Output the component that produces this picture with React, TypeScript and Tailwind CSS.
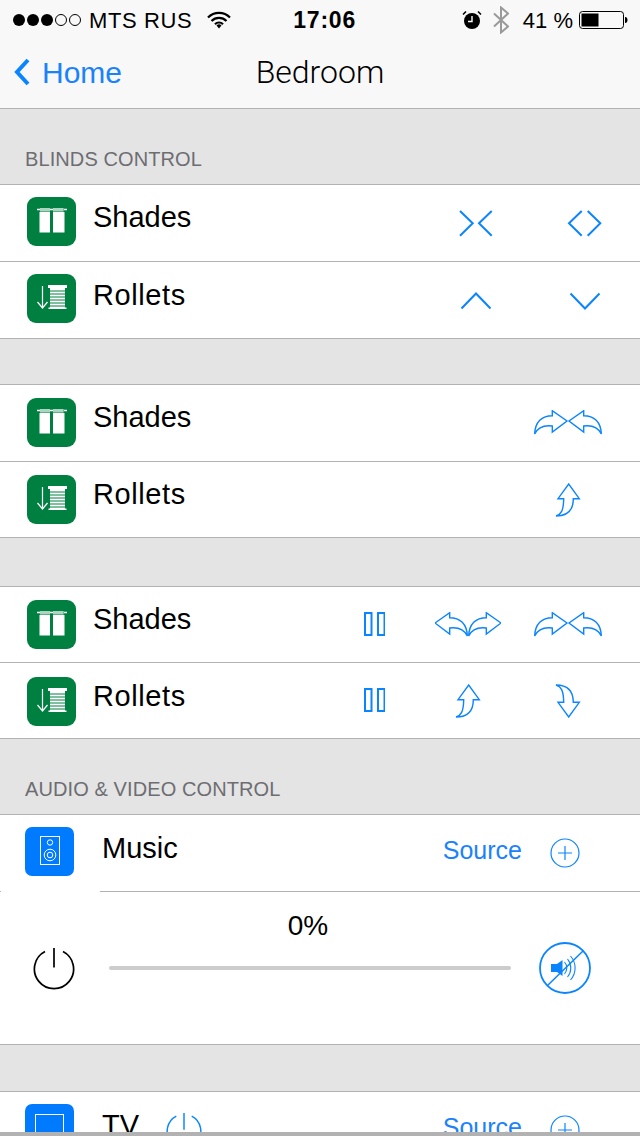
import type { ReactNode } from 'react'

const blue = '#0a84ff'

function ShadesTile() {
  return (
    <div className="h-[49px] w-[49px] shrink-0 rounded-[9px] bg-[#008040]">
      <svg width="49" height="49" viewBox="0 0 49 49" fill="none">
        <rect x="13" y="11" width="10" height="3.500" fill="#fff" opacity="0.45" />
        <rect x="26" y="11" width="11" height="3.500" fill="#fff" opacity="0.45" />
        <path d="M14 11v3.500M16 11v3.500M18 11v3.500M20 11v3.500M22 11v3.500M27 11v3.500M29 11v3.500M31 11v3.500M33 11v3.500M35 11v3.500" stroke="#fff" strokeWidth="0.8" />
        <path d="M10 12.500h3M23 12.500h3M37 12.500h3" stroke="#fff" strokeWidth="1.400" />
        <rect x="12.500" y="15" width="10.500" height="20.500" fill="#fff" />
        <rect x="26" y="15" width="11.500" height="20.500" fill="#fff" />
      </svg>
    </div>
  )
}

function RolletsTile() {
  return (
    <div className="h-[49px] w-[49px] shrink-0 rounded-[9px] bg-[#008040]">
      <svg width="49" height="49" viewBox="0 0 49 49" fill="none">
        <path d="M15.500 12v22M10.500 28l5 6 5-6" stroke="#fff" strokeWidth="1.200" />
        <rect x="21" y="11" width="19" height="3" fill="#fff" />
        <rect x="23" y="14" width="15" height="20" fill="#fff" />
        <path d="M23 17h15M23 20h15M23 23h15M23 26h15M23 29h15M23 32h15" stroke="#008040" strokeWidth="1" />
        <rect x="21.500" y="33.500" width="18" height="1.500" fill="#fff" />
      </svg>
    </div>
  )
}

function SpeakerTile() {
  return (
    <div className="h-[49px] w-[49px] shrink-0 rounded-[7px] bg-[#007aff]">
      <svg width="49" height="49" viewBox="0 0 49 49" fill="none" stroke="#fff">
        <rect x="15.500" y="9.500" width="19" height="28" />
        <circle cx="25" cy="15.500" r="2.700" />
        <circle cx="25" cy="28" r="5.800" />
        <circle cx="25" cy="28" r="2.800" />
      </svg>
    </div>
  )
}

function TvTile() {
  return (
    <div className="h-[49px] w-[49px] shrink-0 rounded-[7px] bg-[#007aff]">
      <svg width="49" height="49" viewBox="0 0 49 49" fill="none" stroke="#fff">
        <rect x="10.500" y="10.500" width="28" height="24" />
      </svg>
    </div>
  )
}

function Chevrons({ d }: { d: string }) {
  return (
    <svg width="36" height="28" viewBox="0 0 36 28" fill="none" stroke={blue} strokeWidth="2">
      <path d={d} />
    </svg>
  )
}

const closeH = 'M2 2l12.700 12.300L2 26.700M33.700 2L21 14.300l12.700 12.400'
const openH = 'M14.700 2L2 14.300l12.700 12.400M20.700 2l12.600 12.300-12.600 12.400'
const up = 'M3.500 22.500L18 7.500 32.500 22.500'
const down = 'M3.500 7.500L18 22.500 32.500 7.500'

const arrowD = 'M0.700 24C1 12 8 5.700 18.300 5.700V0.700L33 11 18.300 22V16C10 15 4 17 0.700 24Z'

function ArrowsIn() {
  return (
    <svg width="68" height="26" viewBox="0 0 68 26" fill="none" stroke={blue} strokeWidth="1.400">
      <path d={arrowD} />
      <path d={arrowD} transform="translate(68 0) scale(-1 1)" />
    </svg>
  )
}

function ArrowsOut() {
  return (
    <svg width="66" height="26" viewBox="0 0 66 26" fill="none" stroke={blue} strokeWidth="1.400">
      <path d={arrowD} transform="translate(33 0)" />
      <path d={arrowD} transform="translate(33 0) scale(-1 1)" />
    </svg>
  )
}

const arrowUpD = 'M1 33C6 31.500 8.500 28 8.700 15.700H3L13.700 1 24.300 15.700H18.300C18.300 27 12 33 1 33Z'

function ArrowUp() {
  return (
    <svg width="26" height="34" viewBox="0 0 26 34" fill="none" stroke={blue} strokeWidth="1.400">
      <path d={arrowUpD} />
    </svg>
  )
}

function ArrowDown() {
  return (
    <svg width="26" height="34" viewBox="0 0 26 34" fill="none" stroke={blue} strokeWidth="1.400">
      <path d={arrowUpD} transform="translate(0 34) scale(1 -1)" />
    </svg>
  )
}

function Pause() {
  return (
    <svg className="mb-[2px]" width="22" height="24" viewBox="0 0 22 24" fill="none" stroke={blue} strokeWidth="2">
      <rect x="2" y="1" width="6.500" height="22" />
      <rect x="15" y="1" width="6.500" height="22" />
    </svg>
  )
}

function Power({ color, size }: { color: string; size: number }) {
  return (
    <svg width={size} height={size} viewBox="0 0 42 42" fill="none" stroke={color} strokeWidth="1.700">
      <path d="M12 3.600A19.600 19.600 0 1 0 30 3.600M21 0V19.500" />
    </svg>
  )
}

function Plus() {
  return (
    <svg width="30" height="30" viewBox="0 0 30 30" fill="none" stroke={blue} strokeWidth="1.200">
      <circle cx="15" cy="15" r="14" />
      <path d="M8 15h14M15 8v14" />
    </svg>
  )
}

function Mute() {
  return (
    <svg width="52" height="52" viewBox="0 0 52 52" fill="none" stroke={blue}>
      <circle cx="26" cy="26" r="25" strokeWidth="1.800" />
      <path d="M12 22h6l5.500-4v16l-5.500-4h-6Z" fill={blue} stroke="none" />
      <path d="M44.500 8.500L8.500 43.500" strokeWidth="1.500" />
      <path d="M25.500 20a9 9 0 0 1 0 12M28.500 17a14 14 0 0 1 0 18M31.500 14a18 18 0 0 1 0 24" strokeWidth="1.100" />
    </svg>
  )
}

function Wifi() {
  return (
    <svg width="24" height="18" viewBox="0 0 24 18" fill="none" stroke="#000" strokeWidth="2.200">
      <path d="M1 6.500a15.500 15.500 0 0 1 22 0M4.500 10a10.500 10.500 0 0 1 15 0M8 13.200a5.600 5.600 0 0 1 8 0" />
      <path d="M9.500 14.500L12 17.500l2.500-3a3.500 3.500 0 0 0-5 0Z" fill="#000" stroke="none" />
    </svg>
  )
}

function Alarm() {
  return (
    <svg width="20" height="20" viewBox="0 0 20 20" fill="none">
      <circle cx="10" cy="11" r="8" fill="#000" />
      <path d="M10 6v5.500H6" stroke="#fff" strokeWidth="1.400" />
      <path d="M1 4.500L4 1.500M19 4.500L16 1.500" stroke="#000" strokeWidth="1.600" />
    </svg>
  )
}

function Bluetooth() {
  return (
    <svg width="16" height="28" viewBox="0 0 16 28" fill="none" stroke="#9a9a9a" strokeWidth="2">
      <path d="M1 7.500l14 13L8 26.500V1.500l7 6-14 13" />
    </svg>
  )
}

function Battery() {
  return (
    <svg width="49" height="20" viewBox="0 0 49 20" fill="none">
      <rect x="0.500" y="1.500" width="44" height="17" rx="3" stroke="#000" />
      <rect x="2.500" y="3.500" width="17" height="13" fill="#000" />
      <path d="M46 7c2 0 2.500 1.500 2.500 3s-.5 3-2.500 3Z" fill="#000" />
    </svg>
  )
}

function StatusBar() {
  return (
    <div className="flex h-10 items-center pl-[13px] pr-[12px] text-[22px] text-black">
      <div className="flex gap-[2px]">
        {[0, 1, 2].map((i) => (
          <span key={i} className="h-3 w-3 rounded-full bg-black" />
        ))}
        {[0, 1].map((i) => (
          <span key={i} className="h-3 w-3 rounded-full border border-black" />
        ))}
      </div>
      <span className="ml-[8px] tracking-[0.6px]">MTS RUS</span>
      <span className="ml-[15px]">
        <Wifi />
      </span>
      <span className="ml-[62px] text-[23px] font-bold tracking-[0.8px]">17:06</span>
      <span className="ml-auto">
        <Alarm />
      </span>
      <span className="ml-[11px]">
        <Bluetooth />
      </span>
      <span className="ml-[14px]">41 %</span>
      <span className="ml-[6px]">
        <Battery />
      </span>
    </div>
  )
}

function NavBar() {
  return (
    <div className="relative flex h-[69px] items-center border-b border-[#b2b2b2] pb-[4px] pl-[13px]">
      <svg width="18" height="28" viewBox="0 0 18 28" fill="none" stroke={blue} strokeWidth="4">
        <path d="M15 2L4 14l11 12" />
      </svg>
      <span className="ml-[11px] text-[30px] text-[#1a82fb]">Home</span>
      <span className="absolute inset-x-0 text-center font-['Roboto',sans-serif] text-[32px] font-light text-black">
        Bedroom
      </span>
    </div>
  )
}

function BlindRow({
  tile,
  name,
  height = 'h-[76px]',
  tileClass = 'mb-0',
  textClass = 'mb-[10px]',
  padRight,
  children,
}: {
  tile: ReactNode
  name: string
  height?: string
  tileClass?: string
  textClass?: string
  padRight: string
  children: ReactNode
}) {
  return (
    <div className={`flex items-center border-b border-[#b2b2b2] bg-white ${height}`}>
      <div className={`ml-[27px] ${tileClass}`}>{tile}</div>
      <span className={`ml-[17px] text-[29px] text-black ${name === 'Rollets' ? 'tracking-[0.6px]' : ''} ${textClass}`}>
        {name}
      </span>
      <div className={`ml-auto flex items-center ${padRight}`}>{children}</div>
    </div>
  )
}

function Band({ height, label }: { height: string; label?: string }) {
  return (
    <div className={`flex items-end border-b border-[#b2b2b2] bg-[#e4e4e4] pl-[25px] text-[20px] tracking-[0.1px] text-[#6d6d72] ${height}`}>
      {label && <span className="mb-[10px]">{label}</span>}
    </div>
  )
}

export default function App() {
  return (
    <div className="h-[1136px] w-[640px] overflow-hidden bg-white font-['Liberation_Sans',sans-serif]">
      <div className="bg-[#f8f8f8]">
        <StatusBar />
        <NavBar />
      </div>

      <Band height="h-[76px]" label="BLINDS CONTROL" />
      <BlindRow tile={<ShadesTile />} name="Shades" height="h-[77px]" tileClass="mb-[3px]" padRight="pr-[37px]">
        <Chevrons d={closeH} />
        <div className="ml-[73px]">
          <Chevrons d={openH} />
        </div>
      </BlindRow>
      <BlindRow tile={<RolletsTile />} name="Rollets" height="h-[77px]" tileClass="mb-[3px]" textClass="mb-[8px]" padRight="pr-[37px]">
        <Chevrons d={up} />
        <div className="ml-[73px]">
          <Chevrons d={down} />
        </div>
      </BlindRow>

      <Band height="h-[46px]" />
      <BlindRow tile={<ShadesTile />} name="Shades" height="h-[77px]" tileClass="mb-[1px]" padRight="pr-[38px]">
        <ArrowsIn />
      </BlindRow>
      <BlindRow tile={<RolletsTile />} name="Rollets" padRight="pr-[59px]">
        <ArrowUp />
      </BlindRow>

      <Band height="h-[49px]" />
      <BlindRow tile={<ShadesTile />} name="Shades" padRight="pr-[38px]">
        <Pause />
        <div className="ml-[50px]">
          <ArrowsOut />
        </div>
        <div className="ml-[33px]">
          <ArrowsIn />
        </div>
      </BlindRow>
      <BlindRow tile={<RolletsTile />} name="Rollets" tileClass="mt-[1px]" textClass="mb-[8px]" padRight="pr-[59px]">
        <Pause />
        <div className="ml-[70px]">
          <ArrowUp />
        </div>
        <div className="ml-[74px]">
          <ArrowDown />
        </div>
      </BlindRow>

      <Band height="h-[76px]" label="AUDIO & VIDEO CONTROL" />

      {/* music row, its divider stops short under the tile */}
      <div className="flex h-[76px] items-center bg-white">
        <div className="mb-[3px] ml-[25px]">
          <SpeakerTile />
        </div>
        <span className="mb-[8px] ml-[28px] text-[29px] text-black">Music</span>
        <span className="mb-[4px] ml-auto text-[25px] text-[#1a82fb]">Source</span>
        <div className="ml-[28px] mr-[60px]">
          <Plus />
        </div>
      </div>
      <div className="flex h-px">
        <div className="w-px bg-[#b2b2b2]" />
        <div className="ml-[99px] flex-1 bg-[#b2b2b2]" />
      </div>

      <div className="flex h-[153px] items-start border-b border-[#b2b2b2] bg-white pl-[33px] pr-[49px] pt-[17px]">
        <div className="mt-[39px]">
          <Power color="#000" size={42} />
        </div>
        <div className="ml-[34px] flex-1">
          <div className="mr-[4px] text-center text-[28px] leading-[34px] text-black">0%</div>
          <div className="mt-[23px] h-[4px] rounded-full bg-[#cccccc]" />
        </div>
        <div className="ml-[28px] mt-[33px]">
          <Mute />
        </div>
      </div>

      <Band height="h-[47px]" />
      <div className="h-[40px] overflow-hidden bg-white">
        <div className="flex h-[76px] items-center">
          <div className="mb-[3px] ml-[25px]">
            <TvTile />
          </div>
          <span className="mb-[8px] ml-[28px] text-[29px] text-black">TV</span>
          <div className="ml-[27px] mt-[1px]">
            <Power color={blue} size={36} />
          </div>
          <span className="mb-[4px] ml-auto text-[25px] text-[#1a82fb]">Source</span>
          <div className="ml-[28px] mr-[60px]">
            <Plus />
          </div>
        </div>
      </div>
      <div className="h-[4px] bg-[#b2b2b2]" />
    </div>
  )
}
